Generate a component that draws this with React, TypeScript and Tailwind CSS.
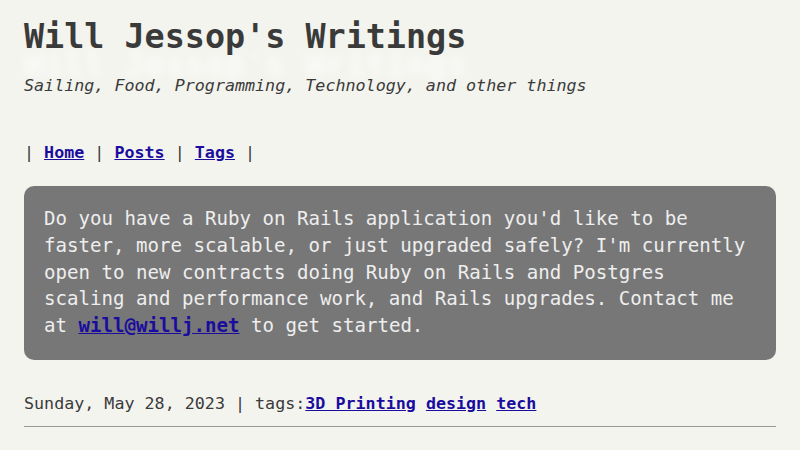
import React from "react";

const mono = "font-['DejaVu_Sans_Mono',monospace]";
const link = "font-bold text-[#1a0d9e] underline";

const NavBar: React.FC = () => (
  <nav className="mt-[43px] text-[16.7px] leading-[24px] text-[#3a3a3a]">
    |{" "}
    <a href="#" className={link}>
      Home
    </a>{" "}
    |{" "}
    <a href="#" className={link}>
      Posts
    </a>{" "}
    |{" "}
    <a href="#" className={link}>
      Tags
    </a>{" "}
    |
  </nav>
);

const ContractBox: React.FC = () => (
  <div className="mt-[22px] rounded-[10px] bg-[#777777] px-5 py-5 text-[19.1px] leading-[26.75px] text-[#eeeeee]">
    Do you have a Ruby on Rails application you'd like to be faster, more
    scalable, or just upgraded safely? I'm currently open to new contracts
    doing Ruby on Rails and Postgres scaling and performance work, and Rails
    upgrades. Contact me at{" "}
    <a href="mailto:will@willj.net" className={link}>
      will@willj.net
    </a>{" "}
    to get started.
  </div>
);

const PostMeta: React.FC = () => (
  <div className="mt-[31px] text-[16.7px] leading-[24px] text-[#3a3a3a]">
    Sunday, May 28, 2023 | tags:
    <a href="#" className={link}>
      3D Printing
    </a>{" "}
    <a href="#" className={link}>
      design
    </a>{" "}
    <a href="#" className={link}>
      tech
    </a>
  </div>
);

export default function App() {
  return (
    <div className={`min-h-[450px] bg-[#f4f4ef] px-6 pt-[16px] ${mono}`}>
      <h1 className="text-[33.4px] font-bold leading-[42px] text-[#3a3a3a] [text-shadow:0_28px_10px_rgba(255,255,255,0.55)]">
        Will Jessop's Writings
      </h1>
      <p className="mt-[15px] text-[16.7px] italic leading-[24px] text-[#3a3a3a]">
        Sailing, Food, Programming, Technology, and other things
      </p>
      <NavBar />
      <ContractBox />
      <PostMeta />
      <hr className="mt-[11px] border-t border-[#999999]" />
    </div>
  );
}
